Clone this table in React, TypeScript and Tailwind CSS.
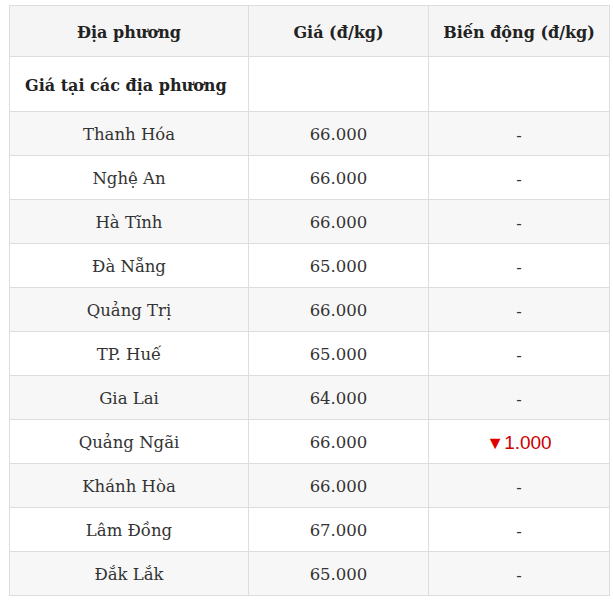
import React from "react";

const rows: [string, string, string][] = [
  ["Thanh Hóa", "66.000", "-"],
  ["Nghệ An", "66.000", "-"],
  ["Hà Tĩnh", "66.000", "-"],
  ["Đà Nẵng", "65.000", "-"],
  ["Quảng Trị", "66.000", "-"],
  ["TP. Huế", "65.000", "-"],
  ["Gia Lai", "64.000", "-"],
  ["Quảng Ngãi", "66.000", "down"],
  ["Khánh Hòa", "66.000", "-"],
  ["Lâm Đồng", "67.000", "-"],
  ["Đắk Lắk", "65.000", "-"],
];

const cell = "border border-[#ddd] pt-[4px] pb-0";

export default function App() {
  return (
    <div className="bg-white w-[613px] h-[607px] pt-[5px] pl-[9px]" style={{ fontFamily: '"DejaVu Serif", serif' }}>
      <table className="border-collapse table-fixed w-[600px] text-[#333] text-[16.5px]">
        <colgroup>
          <col className="w-[239px]" />
          <col className="w-[180px]" />
          <col className="w-[181px]" />
        </colgroup>
        <thead>
          <tr className="bg-[#f5f5f5] h-[51px]">
            <th className={`${cell} font-bold text-[16px] text-[#222] text-center`}>Địa phương</th>
            <th className={`${cell} font-bold text-[16px] text-[#222] text-center`}>Giá (đ/kg)</th>
            <th className={`${cell} font-bold text-[16px] text-[#222] text-center`}>Biến động (đ/kg)</th>
          </tr>
        </thead>
        <tbody>
          <tr className="bg-white h-[55px]">
            <td className={`${cell} font-bold text-[16px] text-[#222] text-left pl-[15px]`}>Giá tại các địa phương</td>
            <td className={cell}></td>
            <td className={cell}></td>
          </tr>
          {rows.map(([name, price, change], i) => (
            <tr key={name} className={(i % 2 === 0 ? "bg-[#f7f7f7]" : "bg-white") + " h-[44px]"}>
              <td className={`${cell} text-center`}>{name}</td>
              <td className={`${cell} text-center`}>{price}</td>
              <td className={`${cell} text-center`}>
                {change === "down" ? (
                  <span className="text-[#cc0000] text-[19px]" style={{ fontFamily: '"Liberation Sans", sans-serif' }}>
                    <span className="text-[#e00000] text-[18px]">▼</span>1.000
                  </span>
                ) : (
                  <span style={{ fontFamily: '"Liberation Sans", sans-serif' }}>-</span>
                )}
              </td>
            </tr>
          ))}
        </tbody>
      </table>
    </div>
  );
}
